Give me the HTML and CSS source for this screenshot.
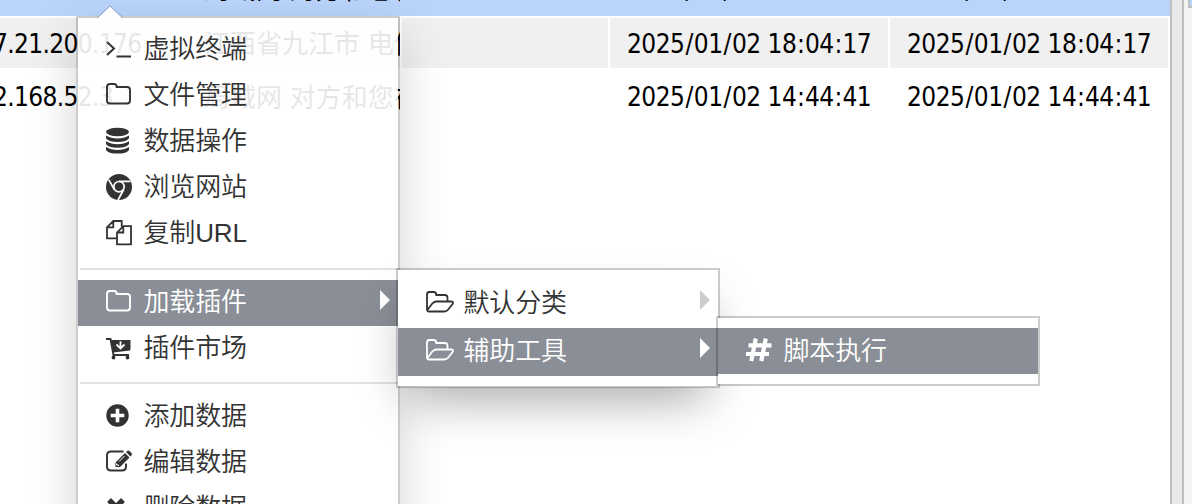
FILE: index.html
```
<!DOCTYPE html>
<html lang="zh-CN">
<head>
<meta charset="utf-8">
<title>数据管理</title>
<link rel="stylesheet" href="styles.css">
</head>
<body>
<svg class="defs" width="0" height="0">
  <symbol id="folder" viewBox="0 0 28 28"><path d="M2 8V6.2Q2 3 5 3h4q2.700 0 2.700 3H22q3 0 3 3v10.500q0 3-3 3H5q-3 0-3-3z" fill="none" stroke="currentColor" stroke-width="1.900"/></symbol>
  <symbol id="open" viewBox="0 0 30 28"><path d="M2 21V5.500Q2 3 4.500 3h4.300q2.500 0 2.500 3H20q2.500 0 2.500 3v3M2 21.500 7.500 14.300Q9.500 12.500 11 12.500h15q3.200 0 1.600 2.600L23 20.700Q21.500 22.500 19.500 22.500H4Q2 22.500 2 20" fill="none" stroke="currentColor" stroke-width="1.800"/></symbol>
</svg>
<div class="app">
  <main class="grid">
    <div class="row selected"><span></span><span class="place">局域网 对方和您在</span><span></span><span class="time">2025<i>/</i>01<i>/</i>03 10<b>:</b>04<b>:</b>17</span><span class="time">2025<i>/</i>01<i>/</i>03 10<b>:</b>04<b>:</b>17</span></div>
    <div class="row odd"><span class="ip">7.21.200.176</span><span class="place">江西省九江市 电信</span><span></span><span class="time">2025<i>/</i>01<i>/</i>02 18<b>:</b>04<b>:</b>17</span><span class="time">2025<i>/</i>01<i>/</i>02 18<b>:</b>04<b>:</b>17</span></div>
    <div class="row even"><span class="ip">2.168.52.3</span><span class="place">局域网 对方和您在</span><span></span><span class="time">2025<i>/</i>01<i>/</i>02 14<b>:</b>44<b>:</b>41</span><span class="time">2025<i>/</i>01<i>/</i>02 14<b>:</b>44<b>:</b>41</span></div>
  </main>
  <div class="splitter"></div>
  <aside class="side"><div class="panel"></div></aside>
</div>
<nav class="menu main-menu">
  <svg class="pointer" width="28" height="14" viewBox="0 0 28 14"><path d="M1 14 14 1 27 14z" fill="#fff"/><path d="M1 13 14 1 27 13" fill="none" stroke="#8ba0bf" stroke-width="1"/></svg>
  <div class="item"><svg class="icon" viewBox="0 0 28 28"><path d="m2 7 7 6.500L2 20M11.500 21.500H26" fill="none" stroke="currentColor" stroke-width="2"/></svg>虚拟终端</div>
  <div class="item"><svg class="icon"><use href="#folder"/></svg>文件管理</div>
  <div class="item"><svg class="icon" viewBox="0 0 28 28"><g fill="currentColor"><ellipse cx="12.500" cy="5" rx="11.500" ry="4.200"/><path d="M1 8.500q5 3 11.500 3t11.500-3v2.800q-2 3.700-11.500 3.700T1 11.300zM1 14.300q5 3 11.500 3t11.500-3v2.800q-2 3.700-11.500 3.700T1 17.100zM1 20.100q5 3 11.500 3t11.500-3v2.800q-2 3.700-11.500 3.700T1 22.900z"/></g></svg>数据操作</div>
  <div class="item"><svg class="icon" viewBox="0 0 28 28"><circle cx="14" cy="14" r="13" fill="currentColor"/><circle cx="14" cy="13.700" r="5.200" fill="none" stroke="#fff" stroke-width="1.700"/><path d="M14 8.300H25.500M9.300 16.500 3.700 6.600M18.700 16.500 13 27" fill="none" stroke="#fff" stroke-width="1.700"/></svg>浏览网站</div>
  <div class="item"><svg class="icon" viewBox="0 0 28 28"><g fill="none" stroke="currentColor" stroke-width="1.800"><path d="M11 19.300H2V8.300L8.300 2H16.700V7.500M8.300 2v6.300H2M12 25.300V13.500L18.300 7.200H26v18.100zM18.300 7.200v6.300H12"/></g></svg>复制URL</div>
  <hr class="first">
  <div class="item lifted active"><svg class="icon"><use href="#folder"/></svg>加载插件<svg class="arrow" viewBox="0 0 10 20"><path d="M0 0 10 10 0 20z"/></svg></div>
  <div class="item lifted"><svg class="icon" viewBox="0 0 28 28"><path d="M1 5h4.500l3 16H24M8 17.500 25 15.500" fill="none" stroke="currentColor" stroke-width="1.900"/><path d="M5.700 6H25.500v9.500L8 17.500z" fill="currentColor"/><circle cx="8.500" cy="23.500" r="1.900" fill="currentColor"/><circle cx="22.500" cy="23.500" r="1.900" fill="currentColor"/><path d="M15.500 7.300v7M11.500 10.500l4 4 4-4" fill="none" stroke="#fff" stroke-width="1.800"/></svg>插件市场</div>
  <hr>
  <div class="item lifted"><svg class="icon" viewBox="0 0 28 28"><circle cx="12.500" cy="13.500" r="11.200" fill="currentColor"/><path d="M12.500 6.700v13.600M5.700 13.500h13.600" stroke="#fff" stroke-width="3.600"/></svg>添加数据</div>
  <div class="item lifted"><svg class="icon" viewBox="0 0 28 28"><path d="M18.500 3.500H6q-4 0-4 4v11q0 4 4 4h11q4 0 4-4v-3" fill="none" stroke="currentColor" stroke-width="1.900"/><path d="m10.500 14.500 9.500-9.500 4.500 4.500-9.500 9.500h-4.500zM21 4l1.500-1.200q1-.8 2 .2l2 2q1 1 .2 2L25.500 8.500z" fill="currentColor"/><path d="m14 13.500 5.500-5.500M11.500 15.500v1.500h2v1" stroke="#fff" stroke-width="1" fill="none"/></svg>编辑数据</div>
  <div class="item lifted"><svg class="icon" viewBox="0 0 28 28"><path d="m4 6 14 14M18 6l-14 14" stroke="currentColor" stroke-width="5.500"/></svg>删除数据</div>
</nav>
<nav class="menu plugin-menu">
  <div class="item"><svg class="icon wide"><use href="#open"/></svg>默认分类<svg class="arrow" viewBox="0 0 10 20"><path d="M0 0 10 10 0 20z"/></svg></div>
  <div class="item active"><svg class="icon wide"><use href="#open"/></svg>辅助工具<svg class="arrow" viewBox="0 0 10 20"><path d="M0 0 10 10 0 20z"/></svg></div>
</nav>
<nav class="menu tool-menu">
  <div class="item active"><svg class="icon" viewBox="0 0 28 28"><path d="M10.800 1.500 6.300 24M20.800 1.500 16.300 24M3.500 8.300H26.500M1 17H24" stroke="currentColor" stroke-width="4.200" fill="none"/></svg>脚本执行</div>
</nav>
</body>
</html>
```
FILE: styles.css
```
* { box-sizing: border-box; }
body { margin: 0; height: 504px; overflow: hidden; position: relative; background: #fff; color: #000; font: 26px "DejaVu Sans Condensed", "Noto Sans CJK SC", sans-serif; }
.defs { position: absolute; }
.app { display: flex; height: 504px; }
.grid { width: 1170px; overflow: hidden; }
.row { display: grid; grid-template-columns: 194px 204px 206px 278px 278px; column-gap: 2px; height: 50px; line-height: 50px; white-space: nowrap; }
.row > span { overflow: hidden; }
.selected { height: 52px; background: #bad5fc; margin: -36px 0 2px; }
.odd > span { background: #f0f0f0; }
.even { margin-top: 4px; }
.ip { text-indent: -7px; letter-spacing: -.65px; padding-top: 1px; }
.row > .place { padding-left: 8px; font-family: "Noto Sans CJK SC", sans-serif; line-height: 48px; word-spacing: 2px; }
.time { padding: 1px 0 0 17px; letter-spacing: -.52px; }
.even > .time, .even > .ip { padding-top: 0; }
.time i { font-style: normal; padding: 0 1px; }
.time b { font-weight: normal; padding: 0 .7px; }
.splitter { width: 14px; background: #e9e9e9; border: solid #c0c0c0; border-width: 0 2px; }
.side { flex: 1; background: #f3f3f3; padding-left: 4px; }
.panel { height: 8px; background: #bad5fc; border: solid #c0c0c0; border-width: 0 0 2px 2px; }
.menu { position: absolute; width: 324px; background: rgba(255,255,255,.9); background-clip: padding-box; border: 2px solid rgba(0,0,0,.2); color: #333; font-family: "Liberation Sans", "Noto Sans CJK SC", sans-serif; font-weight: 350; }
.main-menu { left: 76px; top: 16px; height: 560px; padding-top: 8px; box-shadow: 0 16px 46px -2px rgba(0,0,0,.19); }
.plugin-menu { left: 396px; top: 268px; height: 120px; padding-top: 10px; background-color: #fff; box-shadow: 0 24px 50px -14px rgba(0,0,0,.36); }
.tool-menu { left: 716px; top: 316px; height: 70px; padding-top: 10px; background-color: #fff; }
.item { height: 46px; line-height: 46px; display: flex; align-items: center; padding: 0 8px 0 27px; letter-spacing: -.15px; }
.lifted { padding-bottom: 3px; }
.plugin-menu .item { height: 48px; padding-bottom: 2px; }
.active { background: #8a8e96; color: #fff; }
.icon { width: 28px; height: 28px; flex: none; margin-right: 10.500px; }
.wide { width: 30px; margin-right: 8.500px; }
.arrow { width: 10px; height: 20px; margin: 0 0 4px auto; fill: #ccc; }
.plugin-menu .arrow { margin-bottom: 6px; }
.active .arrow { fill: #fff; }
hr { height: 2px; border: 0; margin: 10px 0 10px 2px; background: #e2e2e2; }
.first { margin-top: 12px; }
.pointer { position: absolute; left: 18px; top: -13px; }
```
